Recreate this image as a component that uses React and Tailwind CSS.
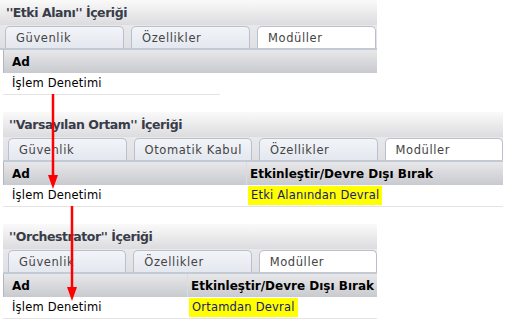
import React from 'react';

const font = { fontFamily: '"DejaVu Sans", Verdana, sans-serif' };

const Tab = ({ label, active }) => (
    <div
        className={`h-[22px] w-[119px] rounded-t-[5px] border border-b-0 border-[#b9c0cb] pl-[10px] pt-[3px] text-[11.5px] tracking-[0.6px] text-[#444] ${active ? 'bg-white' : 'bg-gradient-to-b from-[#f2f4f8] to-[#e4e8ef]'}`}
    >
        {label}
    </div>
);

const Panel = ({ title, tabs, width, col, value, first }) => (
    <div className={`flex flex-col ${first ? '' : 'ml-[3px]'}`} style={{ width }}>
        <div className="h-[25px] bg-gradient-to-b from-[#fafafa] to-[#dcdcdf] pl-[6px] pt-[4px] text-[12.5px] font-bold tracking-[-0.45px] text-[#383c48]">
            {title}
        </div>
        <div className="flex h-[25px] items-end gap-[7px] border-b-2 border-[#c4cad4] bg-gradient-to-b from-[#e9e9ec] to-[#dfe0e4] pl-[5px]">
            {tabs.map((t, i) => (
                <Tab key={t} label={t} active={i === tabs.length - 1} />
            ))}
        </div>
        <div className={`flex h-[23px] border-l border-[#b5b5b8] bg-gradient-to-b from-[#e8e8ea] to-[#c9cacf] text-[12px] font-bold text-black ${first ? 'ml-[3px]' : ''}`}>
            <div className="flex items-center pl-[8px]" style={{ width: col || '100%' }}>Ad</div>
            {col && (
                <div className="flex flex-1 items-center whitespace-nowrap border-l border-[#dcdce0] pl-[3px]">
                    Etkinleştir/Devre Dışı Bırak
                </div>
            )}
        </div>
        <div className={`flex h-[22px] items-center border-b border-[#e4e4e4] text-[11.5px] tracking-[0.2px] text-black ${first ? 'ml-[3px] w-[217px]' : ''}`}>
            <div className="pl-[9px]" style={{ width: col || 'auto' }}>İşlem Denetimi</div>
            {value && (
                <div className="pl-[3px]">
                    <span className="inline-block bg-[#ffff00] px-[3px] py-[1px] text-[#1a1a6e]">{value}</span>
                </div>
            )}
        </div>
    </div>
);

const Arrow = ({ x, y1, y2 }) => (
    <svg className="pointer-events-none absolute left-0 top-0" width="514" height="328">
        <line x1={x} y1={y1} x2={x} y2={y2 - 12} stroke="#ff0000" strokeWidth="2.5" />
        <polygon points={`${x - 5},${y2 - 14} ${x + 5},${y2 - 14} ${x},${y2}`} fill="#ff0000" />
    </svg>
);

export default function App() {
    return (
        <div className="relative h-[328px] w-[514px] overflow-hidden bg-white" style={font}>
            <div className="flex flex-col">
                <Panel first title={"''Etki Alanı'' İçeriği"} tabs={['Güvenlik', 'Özellikler', 'Modüller']} width={377} />
                <div className="h-[17px]" />
                <Panel
                    title={"''Varsayılan Ortam'' İçeriği"}
                    tabs={['Güvenlik', 'Otomatik Kabul', 'Özellikler', 'Modüller']}
                    width={500}
                    col={242}
                    value="Etki Alanından Devral"
                />
                <div className="h-[17px]" />
                <Panel
                    title={"''Orchestrator'' İçeriği"}
                    tabs={['Güvenlik', 'Özellikler', 'Modüller']}
                    width={374}
                    col={183}
                    value="Ortamdan Devral"
                />
            </div>
            <Arrow x={53} y1={94} y2={189} />
            <Arrow x={72} y1={206} y2={301} />
        </div>
    );
}
